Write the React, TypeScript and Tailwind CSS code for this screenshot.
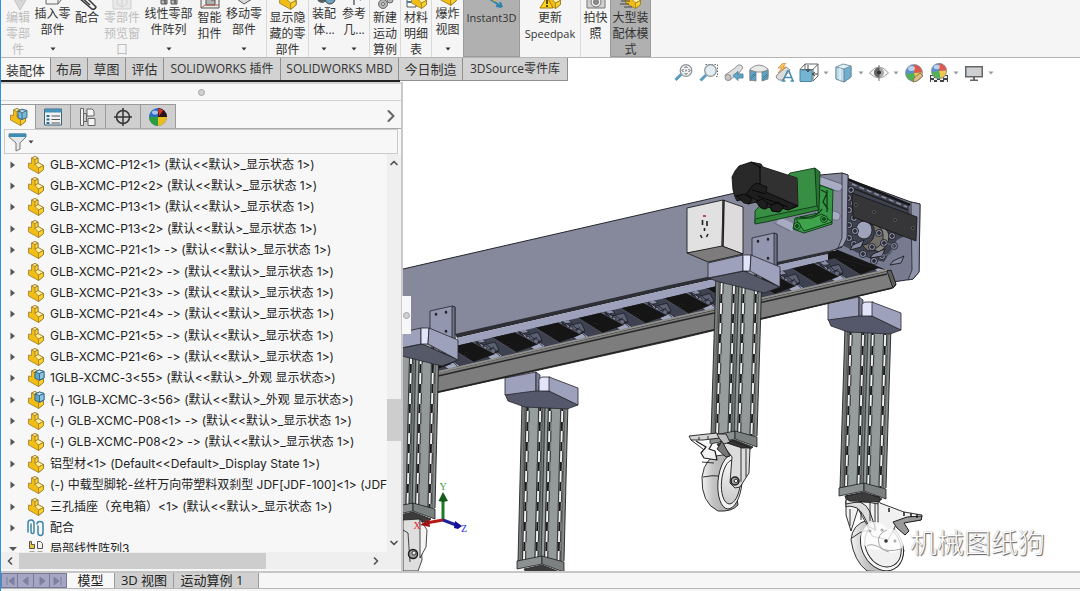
import React from 'react';
import clsx from 'clsx';
import { ChevronDown, ChevronLeft, ChevronRight, ChevronUp } from 'lucide-react';

interface RibbonItem {
  lines: string[];
  icon: string;
  width: string;
  menu?: boolean;
  disabled?: boolean;
  active?: boolean;
  divider?: boolean;
}

const ribbonItems: RibbonItem[] = [
  { lines: ['编辑', '零部', '件'], icon: 'edit', width: 'w-[34px]', disabled: true },
  { lines: ['插入零', '部件'], icon: 'insert', width: 'w-[35px]', menu: true },
  { lines: ['配合'], icon: 'clip', width: 'w-[34px]' },
  { lines: ['零部件', '预览窗', '口'], icon: 'preview', width: 'w-[36px]', disabled: true },
  { lines: ['线性零部', '件阵列'], icon: 'pattern', width: 'w-[57px]', menu: true },
  { lines: ['智能', '扣件'], icon: 'fastener', width: 'w-[25px]' },
  { lines: ['移动零', '部件'], icon: 'move', width: 'w-[44px]', menu: true },
  { lines: ['显示隐', '藏的零', '部件'], icon: 'part', width: 'w-[42px]', divider: true },
  { lines: ['装配', '体...'], icon: 'gear', width: 'w-[31px]', menu: true, divider: true },
  { lines: ['参考', '几...'], icon: 'axis', width: 'w-[30px]', menu: true },
  { lines: ['新建', '运动', '算例'], icon: 'motion', width: 'w-[31px]', divider: true },
  { lines: ['材料', '明细', '表'], icon: 'bom', width: 'w-[31px]', divider: true },
  { lines: ['爆炸', '视图'], icon: 'part', width: 'w-[32px]', menu: true, divider: true },
  { lines: ['Instant3D'], icon: 'instant', width: 'w-[57px]', active: true },
  { lines: ['更新', 'Speedpak'], icon: 'warn', width: 'w-[60px]' },
  { lines: ['拍快', '照'], icon: 'camera', width: 'w-[30px]', divider: true },
  { lines: ['大型装', '配体模', '式'], icon: 'large', width: 'w-[41px]', active: true },
];

const commandTabs = [
  { label: '装配体', width: 'w-[50px]' },
  { label: '布局', width: 'w-[37px]' },
  { label: '草图', width: 'w-[38px]' },
  { label: '评估', width: 'w-[38px]' },
  { label: 'SOLIDWORKS 插件', width: 'w-[117px]', latin: true },
  { label: 'SOLIDWORKS MBD', width: 'w-[118px]', latin: true },
  { label: '今日制造', width: 'w-[64px]' },
  { label: '3DSource零件库', width: 'w-[105px]', latin: true },
];

type NodeKind = 'part' | 'assembly' | 'mates' | 'pattern';

const treeNodes: { label: string; kind: NodeKind; open?: boolean }[] = [
  { label: 'GLB-XCMC-P12<1> (默认<<默认>_显示状态 1>)', kind: 'part' },
  { label: 'GLB-XCMC-P12<2> (默认<<默认>_显示状态 1>)', kind: 'part' },
  { label: 'GLB-XCMC-P13<1> (默认<<默认>_显示状态 1>)', kind: 'part' },
  { label: 'GLB-XCMC-P13<2> (默认<<默认>_显示状态 1>)', kind: 'part' },
  { label: 'GLB-XCMC-P21<1> -> (默认<<默认>_显示状态 1>)', kind: 'part' },
  { label: 'GLB-XCMC-P21<2> -> (默认<<默认>_显示状态 1>)', kind: 'part' },
  { label: 'GLB-XCMC-P21<3> -> (默认<<默认>_显示状态 1>)', kind: 'part' },
  { label: 'GLB-XCMC-P21<4> -> (默认<<默认>_显示状态 1>)', kind: 'part' },
  { label: 'GLB-XCMC-P21<5> -> (默认<<默认>_显示状态 1>)', kind: 'part' },
  { label: 'GLB-XCMC-P21<6> -> (默认<<默认>_显示状态 1>)', kind: 'part' },
  { label: '1GLB-XCMC-3<55> (默认<<默认>_外观 显示状态>)', kind: 'assembly' },
  { label: '(-) 1GLB-XCMC-3<56> (默认<<默认>_外观 显示状态>)', kind: 'assembly' },
  { label: '(-) GLB-XCMC-P08<1> -> (默认<<默认>_显示状态 1>)', kind: 'part' },
  { label: '(-) GLB-XCMC-P08<2> -> (默认<<默认>_显示状态 1>)', kind: 'part' },
  { label: '铝型材<1> (Default<<Default>_Display State 1>)', kind: 'part' },
  { label: '(-) 中载型脚轮-丝杆万向带塑料双刹型 JDF[JDF-100]<1> (JDF', kind: 'part' },
  { label: '三孔插座（充电箱）<1> (默认<<默认>_显示状态 1>)', kind: 'part' },
  { label: '配合', kind: 'mates' },
  { label: '局部线性阵列3', kind: 'pattern', open: true },
];

const Caret = ({ className }: { className?: string }) => (
  <svg viewBox="0 0 6 4" className={clsx('h-[4px] w-[6px]', className)}>
    <path d="M0.500 0.5h5L3 3.500z" fill="currentColor" />
  </svg>
);

const PartShape = () => (
  <g stroke="#94701c" strokeWidth="0.7" strokeLinejoin="round">
    <path d="M4.500 3 8 1.500 11 3v4.500l5.500 3v4L11.500 18.500 1.500 13V8L4.500 8.500z" fill="#f2bd14" />
    <path d="M4.500 3 8 1.500 11 3 8 4.500z" fill="#fff3a8" />
    <path d="M8 4.500 11 3v4.500L8 9.500z" fill="#f7d542" />
    <path d="M8 9.500 11 7.500l5.500 3L11.500 13z" fill="#fff0a0" />
    <path d="M11.500 13 16.500 10.500v4L11.500 18.500z" fill="#f9d22e" />
  </g>
);

const NodeIcon = ({ kind }: { kind: NodeKind }) => (
  <svg viewBox="0 0 19 20" className="h-5 w-[19px] shrink-0">
    {(kind === 'part' || kind === 'assembly') && <PartShape />}
    {kind === 'assembly' && (
      <g stroke="#285b7a" strokeWidth="0.8" strokeLinejoin="round">
        <path d="M8 4 12.500 2l4.500 1.500v6.500L12.500 12 8 10.500z" fill="#5fa8cc" />
        <path d="M8 4 12.500 2l4.500 1.500L12.500 5.500z" fill="#bfe3f3" />
        <path d="M12.500 5.500 17 3.500v6.500L12.500 12z" fill="#8cc6e0" />
      </g>
    )}
    {kind === 'mates' && (
      <g fill="none" stroke="#3e84a8" strokeWidth="1.500" strokeLinecap="round">
        <path d="M1 14V5q0-3 3-3t3 3v9q0 1.500-1.500 1.500T4 14V6" />
        <path d="M10 6q0-2.500 3-2.500t3 2.500v8.500q0 3-2.500 3t-2.500-3V8" />
      </g>
    )}
    {kind === 'pattern' && (
      <g stroke="#555" strokeWidth="1">
        <path d="M2.500 2.500h2v3h3v4h-5z" fill="#e9c63b" />
        <path d="M10.500 2.500h3l2 2v5h-5z" fill="#f2f2f2" />
        <path d="M2.500 13h5v4h-5zM10.500 13h5v4h-5z" fill="#eee" />
      </g>
    )}
  </svg>
);

const RibbonIcon = ({ name }: { name: string }) => {
  switch (name) {
    case 'edit':
      return <path d="M5 8 15 15 23 9 14 24zM8 14l8-3" fill="#d8d8d8" stroke="#c4c4c4" />;
    case 'insert':
      return <path d="M5 14h12v8H5zM5 14l3-4h12l-3 4M17 22l3-4v-8" fill="#f3f3f3" stroke="#666" />;
    case 'clip':
      return <path d="M4 12 17 23q3 1 4-2L10 10q-3-2-4 1l9 8" fill="none" stroke="#3c3c3c" strokeWidth="1.500" />;
    case 'preview':
      return <path d="M3 8h18v15H3zM7 12l5-2 5 2v6l-5 3-5-3zM12 14v7M7 12l5 2 5-2" fill="#e9e9e9" stroke="#cfcfcf" />;
    case 'pattern':
      return <path d="M4 18h4v4H4zM8 16h2v6H8zM14 18h4v4h-4zM18 16h2v6h-2z" fill="#bbb" stroke="#555" />;
    case 'fastener':
      return <g stroke="#555"><path d="M3 10h18v12H3z" fill="#ececec" /><path d="M8 12v7h9v-5h-4v-2z" fill="#b0b0b0" /><path d="M3 22 7 19h14" fill="none" stroke="#b15c44" /></g>;
    case 'move':
      return <path d="M5 17 12 14l8 3-8 5z" fill="#d9d9d9" stroke="#555" />;
    case 'part':
      return <g transform="translate(2 3) scale(1.1)"><PartShape /></g>;
    case 'gear':
      return <g><circle cx="10" cy="16" r="5" fill="#5b6064" /><circle cx="18" cy="17" r="5" fill="#68a3c0" stroke="#444" /></g>;
    case 'axis':
      return <path d="M12 23v-9M8 17h8M12 14l7 4" fill="none" stroke="#5c6770" strokeWidth="1.500" />;
    case 'motion':
      return <g fill="#b4b4b4" stroke="#6a6a6a"><circle cx="10" cy="18" r="4.500" /><circle cx="17" cy="14" r="3" /><circle cx="10" cy="18" r="1.500" fill="#eee" /></g>;
    case 'bom':
      return <g><path d="M3 12h9v9H3z" fill="#fff" stroke="#555" /><path d="M3 16h9" stroke="#3f7fa3" strokeWidth="2" /><g transform="translate(6 4)"><PartShape /></g></g>;
    case 'instant':
      return <g fill="none" stroke="#2f83ad" strokeWidth="2"><path d="M4 9 22 21M22 21l-6-1M22 21l-2-5" /><path d="M10 10 16 14" stroke="#e7b923" strokeWidth="4" /></g>;
    case 'warn':
      return <g><g transform="translate(6 4)"><PartShape /></g><path d="M9 11 15 22H2z" fill="#ffd21e" stroke="#a97c00" /><path d="M9 14v4M9 19v2" stroke="#222" strokeWidth="1.500" /></g>;
    case 'camera':
      return <g stroke="#777"><path d="M3 11h18v11H3z" fill="#d0d0d0" /><circle cx="12" cy="16" r="5" fill="#f0f0f0" /><circle cx="12" cy="16" r="2.500" fill="#8d8d8d" /></g>;
    default:
      return <g><g transform="translate(5 4)"><PartShape /></g><path d="M1 12h9M2 15h9M1 18h9M5 21h8" stroke="#444" /></g>;
  }
};

const Ribbon = () => (
  <div className="flex h-[58px] shrink-0 overflow-hidden border-b border-[#b5b5b5] bg-[#f5f5f5] text-xs leading-4">
    {ribbonItems.map((item) => (
      <button
        key={item.lines.join('')}
        disabled={item.disabled}
        className={clsx(
          'flex h-[57px] shrink-0 flex-col items-center justify-start whitespace-nowrap',
          item.width,
          item.divider && 'border-l border-[#d9d9d9]',
          item.active && 'border border-t-0 border-[#9a9a9a] bg-[#b0b0b0]',
          item.disabled ? 'text-[#bdbdbd]' : 'text-[#333]',
        )}
      >
        <svg viewBox="0 0 24 24" className={clsx('h-6 w-6 shrink-0', item.menu ? '-mt-[18px]' : '-mt-[14px]')}>
          <RibbonIcon name={item.icon} />
        </svg>
        {item.lines.map((line) => (
          <span key={line} className={/^[A-Z]/.test(line) ? 'text-[11px] leading-4' : undefined}>{line}</span>
        ))}
        {item.menu && <Caret className="mt-[9px] shrink-0" />}
      </button>
    ))}
  </div>
);

const Ball = () => (
  <g>
    <circle cx="10" cy="10" r="8.500" fill="#5a8fd0" />
    <path d="M10 10V1.500a8.500 8.500 0 0 1 8.500 8z" fill="#dc5a4e" />
    <path d="M10 10 18.500 9.500a8.500 8.500 0 0 1-7 8.800z" fill="#ecc94a" />
    <path d="M10 10 11.500 18.300A8.500 8.500 0 0 1 1.600 11z" fill="#52b055" />
    <ellipse cx="7.500" cy="5.500" rx="3.500" ry="2.500" fill="#fff" opacity="0.6" />
    <circle cx="10" cy="10" r="8.500" fill="none" stroke="#888" strokeWidth="0.6" />
  </g>
);

const hudTools: { label: string; menu?: boolean; icon: React.ReactNode }[] = [
  {
    label: '整屏显示全图',
    icon: <g fill="none"><path d="m7.500 11-6 6" stroke="#5b9dbd" strokeWidth="3" /><circle cx="12" cy="7.500" r="5.800" fill="#eef1f2" stroke="#8c9499" strokeWidth="1.300" /><circle cx="12" cy="7.500" r="1" fill="#888" /><path d="M10.500 5 12 3.500 13.500 5M10.500 10l1.500 1.500 1.500-1.500M9.500 6 8 7.500 9.500 9M14.500 6 16 7.500 14.500 9" stroke="#555" /></g>,
  },
  {
    label: '局部放大',
    icon: <g fill="none"><path d="M6.500 1.500h12v12h-3" stroke="#666" strokeDasharray="1.500 1.500" /><path d="m7 12-5.500 5.500" stroke="#5b9dbd" strokeWidth="3" /><circle cx="11.500" cy="7.500" r="5.800" fill="#e3edf1" stroke="#8c9499" strokeWidth="1.300" /></g>,
  },
  {
    label: '上一视图',
    icon: <g stroke="#8a8a8a" strokeWidth="0.9"><path d="M1 12 11 5l3-3 3 0 2 3-4 5-9 7q-4 1-5-5z" fill="#dedede" /><circle cx="4" cy="14.500" r="3" fill="#c6c6c6" /><path d="M9 12.500l5-4v2.500h5v4h-5v2.500z" fill="#5fa5c6" stroke="#4a819d" /></g>,
  },
  {
    label: '剖面视图',
    icon: <g stroke="#777" strokeWidth="0.8"><path d="M1 6q9-8 18 0v8q-3-4-5-4V9H6v5l-5 4z" fill="#e9e9e9" /><path d="M1 7l6 2v9l-6-1zM13 9l6-2v9l-6 2z" fill="#5ea3c3" /><path d="m2 14 4-4M2 16l5-5M14 15l4-4M14 17l5-5" stroke="#3c7492" /></g>,
  },
  {
    label: '动态注解视图',
    icon: <g><path d="M2 13 12 4l4 3-8 10q-5 1-6-4z" fill="#dcdcdc" stroke="#8d8d8d" /><path d="M9 0 4 5h4l-4 5 8-6H9l3-4z" fill="#f9c65a" stroke="#c98138" strokeWidth="0.7" /><path d="M9 18 13.500 8h1.500l4 10M11 14.500h6M7.500 18h4M16.500 18h3.500" fill="none" stroke="#4a8cb0" strokeWidth="1.600" /></g>,
  },
  {
    label: '视图定向',
    menu: true,
    icon: <g strokeWidth="1"><path d="M1 6.500 6 1h13v12l-5 5M1 6.500h13l5-5.500M6 1v6M14 6v12" fill="#fff" stroke="#666" /><path d="M1 7h12v11.500H1z" fill="#74b5d3" stroke="#4a87a5" /><path d="M9 2v6M7 6l2 3 2-3M19 11h-5M16 9l-3 2 3 2" fill="none" stroke="#444" /></g>,
  },
  {
    label: '显示样式',
    menu: true,
    icon: <g stroke="#6b8b9b" strokeWidth="0.9"><path d="M2 4 9 1l8 2v11l-7 5-8-3z" fill="#e4f0f5" /><path d="M10 6 17 3v11l-7 5z" fill="#6fb0cf" /><path d="M2 4 10 6v13l-8-3z" fill="#bcdae7" /><path d="M6 5v12.500" stroke="#fff" /></g>,
  },
  {
    label: '隐藏/显示项目',
    menu: true,
    icon: <g><path d="M0.500 10q9.500-12 19 0-9.500 10-19 0z" fill="#f5f5f5" stroke="#999" /><circle cx="10" cy="9.500" r="5" fill="#a8a8a8" /><path d="M10 4.500a5 5 0 0 0 0 10z" fill="#666" /><circle cx="10" cy="9.500" r="2" fill="#222" /><path d="M10 2v16" stroke="#555" strokeWidth="0.800" /></g>,
  },
  {
    label: '编辑外观',
    icon: <g><Ball /><path d="m9 19 1-4 6-5 3 3-6 5z" fill="#dbbd85" stroke="#7b6a4b" strokeWidth="0.8" /></g>,
  },
  {
    label: '应用布景',
    menu: true,
    icon: <g><path d="M1 12h18v7H1z" fill="#444" /><path d="M2 13h3v2H2zM15 13h3v2h-3zM5 15h3v2H5zM11 15h3v2h-3zM2 17h3v2H2zM8 17h3v2H8zM15 17h3v2h-3z" fill="#eee" /><g transform="translate(1 -1) scale(.9)"><Ball /></g></g>,
  },
  {
    label: '视图设定',
    menu: true,
    icon: <g><path d="M1 3h18v11.500H1z" fill="#666" /><path d="M2.500 4.500h15v8.500h-15z" fill="#cdd0d2" /><path d="M9 14h2v2.500h3v1.500H6v-1.500h3z" fill="#666" /></g>,
  },
];

const HeadsUpToolbar = () => (
  <div className="ml-[106px] mt-[5px] flex shrink-0">
    {hudTools.map((tool) => (
      <button
        key={tool.label}
        aria-label={tool.label}
        className={clsx('flex h-5 shrink-0 items-center', tool.menu ? 'w-[35px] gap-1' : 'w-[25px]')}
      >
        <svg viewBox="0 0 20 20" className="h-5 w-5 shrink-0">{tool.icon}</svg>
        {tool.menu && <Caret className="text-[#999]" />}
      </button>
    ))}
  </div>
);

const panelTabs: { label: string; icon: React.ReactNode }[] = [
  { label: 'FeatureManager 设计树', icon: <g transform="translate(1 0)"><PartShape /><path d="M9 4l4-2 5 1.500v7L13 12.500 9 11zM9 4l4 1.500 5-2M13 5.500v7" fill="#77b8d6" stroke="#285b7a" strokeWidth="0.8" /></g> },
  { label: 'PropertyManager', icon: <g><path d="M1.500 2h17v16h-17z" fill="#f2f2f2" stroke="#3b6077" /><path d="M1.500 2h17v3.500h-17z" fill="#4792b8" /><path d="M3.500 8h3v2h-3zM3.500 11.500h3v2h-3zM3.500 15h3v2h-3z" fill="#2f6f93" /><path d="M8.500 9H17M8.500 12.500H17M8.500 16H17" stroke="#555" strokeWidth="1.200" /></g> },
  { label: 'ConfigurationManager', icon: <g fill="#f4f4f4" stroke="#666"><path d="M2.500 1.500h3v17h-3z" /><path d="M5.500 6.500h3M5.500 14.500h4M8.500 6.500v8" /><path d="M9 2h5l2 2v5H9zM10 11.500h7v7h-7z" /></g> },
  { label: 'DimXpertManager', icon: <g fill="none" stroke="#333" strokeWidth="1.500"><circle cx="10" cy="10" r="6.500" /><path d="M10 1v18M1 10h18" /></g> },
  { label: 'DisplayManager', icon: <g><circle cx="10" cy="10" r="9" fill="#2d6cc0" /><path d="M10 10V1a9 9 0 0 1 9 9z" fill="#2b1413" /><path d="M11 9 10 1.500q3 0 5 2z" fill="#d6342b" /><path d="M10 10h9a9 9 0 0 1-9 9z" fill="#e8bd22" /><path d="M10 10v9a9 9 0 0 1-9-9z" fill="#2d9c3d" /><ellipse cx="7" cy="5.500" rx="3" ry="2" fill="#fff" opacity="0.6" /></g> },
];

const FeaturePanel = () => (
  <aside className="flex w-[402px] shrink-0 flex-col border-r-2 border-[#c9c9c9] bg-[#f7f7f7]">
    <div className="flex h-[19px] shrink-0 items-center justify-center border-b border-t-2 border-[#d4d4d4]">
      <span className="h-[7px] w-[7px] rounded-full border border-[#a5a5a5] bg-[#d0d0d0]" />
    </div>
    <div className="mt-[3px] flex h-[25px] shrink-0 border-b border-[#a8a8a8]">
      {panelTabs.map((tab, i) => (
        <button
          key={tab.label}
          aria-label={tab.label}
          className={clsx(
            'flex w-[35px] items-center justify-center border-r border-t border-[#9b9b9b]',
            i === 0 ? '-mb-px h-[25px] bg-[#f7f7f7]' : 'h-6 bg-[#cfcfcf]',
          )}
        >
          <svg viewBox="0 0 20 20" className="h-5 w-5">{tab.icon}</svg>
        </button>
      ))}
      <button aria-label="展开" className="ml-auto text-[#666]">
        <ChevronRight className="h-5 w-5" strokeWidth={2.5} />
      </button>
    </div>
    <label className="mx-[3px] flex h-[25px] shrink-0 items-center border border-[#cbcbcb] pl-[3px]">
      <svg viewBox="0 0 20 20" className="h-5 w-5 shrink-0">
        <path d="M1 2h17v3l-6 6v6l-4 2v-8L1 5z" fill="#e4e8ea" stroke="#777" />
        <path d="M1 1.500h17v3.500H1z" fill="#3c8db5" />
      </svg>
      <Caret className="text-[#444]" />
      <input aria-label="过滤器" className="min-w-0 flex-1 bg-transparent px-1 text-xs outline-none" />
    </label>
    <div className="flex min-h-0 flex-1">
      <div className="min-w-0 flex-1 overflow-hidden">
        <ul className="grid h-[406px] auto-rows-fr [font-family:Inter,'Noto_Sans_CJK_SC',sans-serif] [font-feature-settings:'calt'_0] [font-variant-ligatures:none]">
          {treeNodes.map((node) => (
            <li key={node.label} className="flex min-h-0 items-center whitespace-nowrap pl-2 text-xs leading-5 text-[#222]">
              <button aria-label="展开节点" className="flex w-[18px] shrink-0">
                <svg viewBox="0 0 8 8" className="h-2 w-2 text-[#555]">
                  <path d={node.open ? 'M0 2h8L4 6z' : 'M1.500 0.500v7L6 4z'} fill="currentColor" />
                </svg>
              </button>
              <NodeIcon kind={node.kind} />
              <span className="ml-1">{node.label}</span>
            </li>
          ))}
        </ul>
      </div>
      <div className="flex w-[14px] shrink-0 flex-col items-center justify-between bg-[#efefef] py-[3px] text-[#555]">
        <ChevronUp className="h-3 w-3 shrink-0" strokeWidth={3.5} />
        <span className="mt-[134px] h-[42px] w-full bg-[#cdcdcd]" />
        <ChevronDown className="h-3 w-3 shrink-0" strokeWidth={3.5} />
      </div>
    </div>
    <div className="flex h-[17px] shrink-0 items-center bg-[#efefef] pl-[3px] pr-[19px] text-[#555]">
      <ChevronLeft className="h-3 w-3 shrink-0" strokeWidth={3.5} />
      <span className="ml-[3px] h-4 w-[247px] bg-[#cdcdcd]" />
      <ChevronRight className="ml-auto h-3 w-3 shrink-0" strokeWidth={3.5} />
    </div>
    <div className="h-[2px] shrink-0" />
  </aside>
);

const lilac = '#9da1bb';
const edge = '#24252c';

/* Aluminium profile: x0/y0 is the left top corner, x1/y1 the left bottom one. */
const Leg = ({ x0, y0, x1, y1 }: { x0: number; y0: number; x1: number; y1: number }) => {
  const w = 46;
  const band = (a: number, b: number, fill: string) => (
    <path key={a} d={`M${x0 + a * w} ${y0}L${x0 + b * w} ${y0}L${x1 + b * w} ${y1}L${x1 + a * w} ${y1}z`} fill={fill} />
  );
  const line = (f: number) => `M${x0 + f * w} ${y0}L${x1 + f * w} ${y1}`;
  return (
    <g>
      {band(0, 1, '#7a8080')}
      {band(0.17, 0.36, '#979d9d')}
      {band(0.66, 0.85, '#949a9a')}
      {band(0.93, 0.98, '#8b9191')}
      <g fill="none">
        {[0.13, 0.4, 0.61, 0.88].map((f) => (
          <g key={f}>
            <path d={line(f)} stroke="#f2f2f2" strokeWidth="1.800" />
            <path d={line(f)} stroke="#1c1c1c" strokeWidth="1.900" strokeDasharray="9 11" />
            <path d={line(f - 0.035)} stroke="#2a2a2a" strokeWidth="0.900" />
            <path d={line(f + 0.035)} stroke="#2a2a2a" strokeWidth="0.800" strokeDasharray="11 9" strokeDashoffset="11" />
          </g>
        ))}
        <path d={line(0.06)} stroke="#4d5151" strokeWidth="0.700" />
        <path d={line(0.45)} stroke="#4a4e4e" strokeWidth="0.800" />
        <path d={line(0.5)} stroke="#303434" strokeWidth="0.900" />
        <path d={line(0.54)} stroke="#9aa0a0" strokeWidth="1.500" />
        <path d={line(0.94)} stroke="#4d5151" strokeWidth="0.700" />
        <path d={line(0)} stroke="#222" strokeWidth="0.900" />
        <path d={line(1)} stroke="#222" strokeWidth="0.900" />
      </g>
      <g stroke="#1c1c1c" strokeWidth="0.8" transform={`translate(${x1} ${y1})`}>
        <path d="M6 8 24 4 42 11 38 14 9 13z" fill="#3c3c3c" />
        <path d="M-1 0 24-5V3L-1 8z" fill="#8b9191" />
        <path d="M24-5 46 1V11L24 3z" fill="#7b8181" />
      </g>
    </g>
  );
};

const Block = ({ x, y }: { x: number; y: number }) => (
  <g transform={`translate(${x} ${y})`} stroke={edge} strokeWidth="0.8" strokeLinejoin="round">
    <path d="M0 18 30 14 44 15 73 29 62 33 20 31 3 25z" fill="#55586a" />
    <path d="M0 2 31-4V15L22 16 0 19z" fill={lilac} />
    <path d="M31-4 35-1V2l-1 13h-3z" fill="#7c8097" />
    <path d="M34 3 37 1H45V15H34z" fill="#e2e5fa" />
    <path d="M44 1 73 12V29L44 15z" fill={lilac} />
  </g>
);

const Bracket = ({ x, y }: { x: number; y: number }) => (
  <g transform={`translate(${x} ${y})`} stroke={edge} strokeWidth="0.8" strokeLinejoin="round">
    <path d="M1 23 36 16 72 32 56 38 8 26z" fill="#565968" />
    <path d="M44-17 66-22 69-21V12L44 2z" fill="#9296ae" />
    <path d="M66-22 69-21V12L66 10z" fill="#6f7388" />
    <path d="M0 8 35 0V16L0 23z" fill={lilac} />
    <path d="M35 0H43L42 16H35z" fill="#e2e5fa" />
    <path d="M43 0 72 12V32L42 16z" fill={lilac} />
    <path d="M50-14v.5M60-16v.5M60 3v.5" strokeWidth="2.500" strokeLinecap="round" />
  </g>
);

const Belt = () => (
  <g clipPath="url(#belt)">
    <path d="M403 240H900V400H403z" fill="#3e4150" />
    {Array.from({ length: 12 }, (_, i) => {
      const x = 466 + (i - 1) * 43;
      const y = 354 - (i - 1) * 9.7;
      return (
        <g key={i} transform={`translate(${x} ${y})`}>
          <g stroke="#15161b" strokeWidth="0.7">
            <path d="M-10-15 3-18 16-10 8-9z" fill="#6b7086" />
            <path d="M7-8 12-12 22-6 16-3z" fill="#9a9fb9" />
            <path d="M17-9 29-12 33-4 22 0z" fill="#5b6073" />
            <path d="M20 2 31-2 37 2 26 6z" fill="#a2a7c0" />
            <path d="M3-17 12-19 20-12 14-11z" fill="#8a8fa8" />
            <path d="M10-13l7 12M2-12l12-3M16-1l12-6M21 3l12-6M4-16l14 10M20-10l14 12" fill="none" />
            <circle cx="12" cy="-8" r="2.500" fill="#2a2c36" />
            <circle cx="27" cy="-3" r="2.500" fill="#686d82" />
            <circle cx="19" cy="-6" r="2" fill="#7d8299" />
          </g>
          <path d="M-25-12 -3-17 29 0 7 8z" fill="#151515" />
          <path d="M-25-12 7 8M-3-17 29 0" stroke="#5a5d6a" strokeWidth="0.700" />
          <circle r="1.500" fill="#000" stroke="#3a3a3a" strokeWidth="0.600" />
        </g>
      );
    })}
  </g>
);

const chainLinks = [
  [851, 190], [848, 198], [854, 203], [849, 210], [854, 218], [849, 225], [855, 231], [849, 238], [854, 244],
  [879, 233], [884, 243], [863, 254], [882, 256], [892, 236], [894, 246], [874, 261], [872, 247],
];

const Drive = () => (
  <g strokeLinejoin="round">
    <path d="M840 176 911 202 920 204 919 272 913 279 893 282 880 270 836 250z" fill="#777b90" stroke={edge} />
    <path d="M911 202 920 204 919 272 913 279 908 280 912 270z" fill="#9094ab" stroke={edge} strokeWidth="0.8" />
    <path d="M847 181 866 188 909 206 912 232 897 240 884 262 868 258 844 246z" fill="#3f424f" />
    <path d="M847 179 910 205" stroke="#161616" strokeWidth="2.500" />
    <path d="M850 187 908 210" stroke="#202020" strokeWidth="1.500" />
    <path d="M852 184 907 207" stroke="#8b8fa2" strokeWidth="1.500" strokeDasharray="5 3" />
    <g stroke="#131419" strokeWidth="0.8">
      <ellipse cx="864" cy="230" rx="8" ry="9" fill="#9fa3b9" />
      <path d="M868 222q8 2 6 14-3 9-12 9l6 6q16 0 17-13 0-9-8-13z" fill="#716f68" />
      <path d="M878 226q6 3 5 14-3 8-10 9l6 3q10-5 10-17-2-8-11-9z" fill="#8a8780" />
      {chainLinks.map(([cx, cy]) => (
        <g key={`${cx}-${cy}`}>
          <circle cx={cx} cy={cy} r="3.500" fill="#8b8fa5" />
          <circle cx={cx} cy={cy} r="1.400" fill="#3b3e4a" />
        </g>
      ))}
      <path d="M853 245 864 240 861 247 850 250zM873 254 885 249 882 256 870 258zM893 261 904 256 901 263 890 265z" fill="#85899e" />
      <path d="M886 243l8 3-4 8-9 2" fill="none" stroke="#5b5f70" strokeWidth="1.500" />
    </g>
    <path d="M852 193 917 217 916 241 853 217z" fill="#363638" stroke="#141414" strokeWidth="0.800" />
    {[[856, 205], [874, 212], [895, 220], [913, 228]].map(([cx, cy]) => (
      <circle key={cx} cx={cx} cy={cy} r="1.600" fill="#222" stroke="#777" strokeWidth="0.500" />
    ))}
    <path d="M826 252 838 250 889 271 866 277 826 264z" fill="#161616" />
    <circle cx="854" cy="265" r="1.200" fill="#555" />
  </g>
);

const Motor = () => (
  <g strokeLinejoin="round">
    <g fill="none" strokeLinecap="round">
      <path d="M821 181 838 187M820 212 836 216" stroke="#565a6c" strokeWidth="9" />
      <path d="M821 181 838 187M820 212 836 216" stroke="#a7abc4" strokeWidth="7.500" />
      <path d="M778 220 794 228" stroke="#a7abc4" strokeWidth="7" strokeLinecap="butt" />
      <path d="M774 223l16 8" stroke="#5d6074" strokeWidth="0.700" />
    </g>
    <g stroke="#0f3a17" strokeWidth="0.900">
      <path d="M820 185 825 187 833 190 832 224 804 233 793 229 795 218 818 213z" fill="#379845" />
      <path d="M800 217q16 2 22-8M821 190l6 3-4 9 5 7M827 190v22" fill="none" strokeWidth="1.300" />
      <path d="M796 219 812 218 822 214 832 222 804 231z" fill="#3ea34b" />
      <circle cx="797" cy="226" r="3.500" fill="#3ea34b" />
      <circle cx="824" cy="219" r="3.500" fill="#3ea34b" />
      <circle cx="797" cy="226" r="1.500" fill="#1b5625" />
      <circle cx="824" cy="219" r="1.500" fill="#1b5625" />
      <path d="M755 211 790 173 815 168 818 208 766 221 755 223z" fill="#388f44" />
      <path d="M815 168 820 172 819 210 817 211z" fill="#2a7235" />
      <path d="M755 219 817 206 819 210 766 222 755 224z" fill="#2f8439" />
    </g>
    <path d="M732 177 735 171 739 166 748 163 751 162 761 164 763 167 797 178 798 206 788 210 783 208 778 212 772 211 770 207 764 209 759 206 757 202 748 204 744 199 737 201 735 197 733 190z" fill="#29292a" stroke="#080808" strokeWidth="0.800" />
    <path d="M761 167 797 178 798 206 761 190z" fill="#313132" />
    <g fill="#1e1e1e" stroke="#000" strokeWidth="0.700">
      <path d="M753 185 757 183 767 187 766 192 798 206 788 210 756 200 746 194z" />
      <path d="M736 196l8-2 8 5-3 5-5-1zM756 202l6-3 6 4-2 6-5-1zM770 206l8-4 6 5-4 5-8-1z" />
    </g>
    <path d="M760 166V184M752 190l14 4M758 196l30 11M751 162l10 6" stroke="#000" fill="none" strokeWidth="0.800" />
  </g>
);

const SocketBox = () => (
  <g stroke="#1f1f1f" strokeWidth="0.900" strokeLinejoin="round">
    <path d="M687 208 723 200 722 247 687 253z" fill="#e2e1e1" />
    <path d="M723 200 743 207V254L722 246z" fill="#dddbdb" />
    <path d="M724 200 723 246" strokeWidth="1.500" />
    <path d="M687 253 722 246 743 254 708 262z" fill="#7d7b7b" />
    <path d="M703 216h3" stroke="#a32020" strokeWidth="1.500" />
    <path d="M702.500 220v5M707 221v5M704.500 228v3M700.500 235l1.500 3M708 234l-1.500 3" strokeWidth="1.600" />
  </g>
);

const FrontCaster = () => (
  <g stroke="#1d1d1d" strokeWidth="0.900" strokeLinejoin="round">
    <path d="M722 455q-17 0-20 22-1 26 16 34 14 1 20-6l-8-50z" fill="url(#tread)" />
    <ellipse cx="730" cy="482" rx="12" ry="27" fill="#f3f3f3" transform="rotate(5 730 482)" />
    <ellipse cx="731" cy="482" rx="9.500" ry="22" fill="url(#hub)" transform="rotate(5 731 482)" />
    <path d="M703 477q10-2 16-1" fill="none" />
    <path d="M720 441 750 447 749 473 740 487 735 488 730 483 732 457z" fill="#dcdcdc" />
    <path d="M741 448v34M746 449v28" fill="none" />
    <circle cx="735" cy="481" r="4" fill="#aaa" strokeWidth="1.500" />
    <circle cx="736" cy="481" r="1.800" fill="#fff" />
    <path d="M732 440 750 448 742 448 727 443z" fill="#333" />
    <path d="M722 441 730 456 726 457 717 449z" fill="#777" />
    <path d="M689 436 717 433 720 438 703 440 691 440z" fill="#d4d4d4" />
    <path d="M696 441 706 447 701 453 704 458 717 460 715 451 709 449 712 444" fill="#f2f2f2" strokeWidth="1.200" />
    <path d="M691 440 703 449M702 462l12 1M699 437v3M708 436v3" fill="none" />
    <path d="M717 434h9l4 8-6 2-5-6z" fill="#bcbcbc" />
  </g>
);

const RearCaster = () => (
  <g stroke="#1d1d1d" strokeWidth="0.900" strokeLinejoin="round">
    <path d="M868 520q-16 4-17 20 3 21 16 31l18 1q18-4 19-22z" fill="url(#tread)" />
    <ellipse cx="882" cy="546" rx="20" ry="26" fill="#f7f7f7" transform="rotate(-28 882 546)" />
    <ellipse cx="883" cy="546" rx="17" ry="22" fill="#f0f0f0" transform="rotate(-28 883 546)" />
    <path d="M846 500 878 498 880 503 904 512 922 515 921 520 897 523 888 540 872 536 866 523 858 509 851 531 846 515z" fill="#f1f1f1" />
    <path d="M846 502q18-4 24 10l6 18-7-3q-6-15-12-19-8-3-11-1z" fill="#ddd" />
    <path d="M850 509V526M861 512V520M870 501v20M875 501v30M878 503v20" fill="none" />
    <path d="M852 538q8-7 16-8" fill="none" />
    <path d="M893 522 907 517 922 516 921 520 904 523 909 531 905 535 897 528z" fill="#999" strokeWidth="1" />
    <path d="M904 512v4M911 513v4M917 514v4M889 508v4" strokeWidth="1.500" />
    <path d="M845 496 862 493 880 497 878 502 862 499 847 502z" fill="#666" />
    <path d="M846 500q16-5 32 0v4q-16-4-32 0z" fill="#eee" />
    <circle cx="861" cy="501" r="1" />
  </g>
);

const Triad = () => (
  <g fontSize="10" textAnchor="middle" className="[font-family:'Liberation_Serif',serif]">
    <path d="M443 520V500" stroke="#1d7a25" strokeWidth="3" />
    <path d="M443 492 438.500 501 443 502 448 501z" fill="#145c1c" />
    <path d="M443 520 426 523" stroke="#b51a1a" strokeWidth="3" />
    <path d="M420 525 429 519 430 527z" fill="#a01313" />
    <path d="M443 520 456 525" stroke="#20209b" strokeWidth="3" />
    <path d="M462 526 455 521 454 528 458 529z" fill="#10109a" />
    <text x="443" y="490" fill="#2f9a35">Y</text>
    <text x="417" y="529" fill="#e02b2b">X</text>
    <text x="464" y="532" fill="#2b2be8">Z</text>
  </g>
);

const Model = () => (
  <svg viewBox="403 82 677 489" preserveAspectRatio="xMinYMin slice" className="absolute inset-0 h-full w-full">
    <defs>
      <clipPath id="belt">
        <path d="M438 350 670 297 836 258 889 271 670 321 438 373z" />
      </clipPath>
      <linearGradient id="tread">
        <stop offset="0" stopColor="#f2f2f2" />
        <stop offset="0.300" stopColor="#c4c4c4" />
        <stop offset="1" stopColor="#999" />
      </linearGradient>
      <linearGradient id="hub" x1="0" x2="0" y1="0" y2="1">
        <stop offset="0" stopColor="#f8f8f8" />
        <stop offset="1" stopColor="#c9c9c9" />
      </linearGradient>
    </defs>
    <Leg x0={522} y0={402} x1={518} y1={561} />
    <Block x={505} y={376} />
    <RearCaster />
    <Leg x0={845} y0={326} x1={840} y1={488} />
    <Block x={828} y={301} />
    <Drive />
    <path d="M403 269 735 193 820 175 842 173 848 175 848 238 842 247 828 252 670 286 455 335 403 346z" fill="#85899b" />
    <path d="M403 269 735 193M820 175 842 173 848 175 847 238 842 247 828 252" fill="none" stroke={edge} />
    <path d="M842 173 848 175 847 238 843 246 838 248 842 238z" fill="#989cb3" stroke={edge} strokeWidth="0.800" />
    <path d="M455 334 670 285 828 251 829 254 670 289 457 338z" fill="#2d2e36" />
    <path d="M457 338 670 289 828 254V262L670 298 457 347z" fill={lilac} />
    <Belt />
    <path d="M436 373 670 320 887 271 891 272 896 285 893 288 670 341 436 393z" fill="#7d7d7d" stroke="#1e1e1e" strokeWidth="0.800" />
    <path d="M438 372 670 319 887 270" fill="none" stroke="#8f8f8b" strokeWidth="2" />
    <path d="M438 376 670 323 887 274" fill="none" stroke="#262626" strokeWidth="1.500" />
    <path d="M438 392 670 340 892 288" fill="none" stroke="#222" strokeWidth="1.500" />
    <path d="M887 271 891 270 896 284 893 288z" fill="#5e5e5a" stroke="#1e1e1e" />
    <Motor />
    <SocketBox />
    <Leg x0={716} y0={274} x1={711} y1={436} />
    <Bracket x={708} y={255} />
    <FrontCaster />
    <Leg x0={393} y0={344} x1={389} y1={508} />
    <Bracket x={386} y={328} />
    <g stroke="#1d1d1d" strokeWidth="0.800">
      <path d="M403 520 420 519 422 560 418 571 403 571z" fill="#dedede" />
      <path d="M420 519 427 530 426 547 420 558z" fill="#f5f5f5" />
      <path d="M403 530 408 533 410 562" fill="none" />
      <circle cx="413" cy="554" r="4.500" fill="#9c9c9c" strokeWidth="1.500" />
      <circle cx="414" cy="553" r="2" fill="#eee" />
    </g>
    <Triad />
    <g opacity="0.800">
      <circle cx="875" cy="536" r="14" fill="#fff" />
      <ellipse cx="891" cy="541" rx="13" ry="12" fill="#fff" />
      <path d="M887 530a12 11 0 0 0-8 14q2 6 10 8" fill="none" stroke="#888" strokeWidth="0.900" />
      <path d="M867 546q4-3 12 1 8 6 22 2" fill="none" stroke="#888" strokeWidth="0.900" />
    </g>
    <circle cx="870" cy="531" r="1.500" fill="#aaa" />
    <circle cx="882" cy="530" r="1.500" fill="#aaa" />
    <circle cx="886" cy="541" r="1.800" fill="#333" />
    <circle cx="895" cy="541" r="1.500" fill="#aaa" />
  </svg>
);

const Viewport = () => (
  <main className="relative min-w-0 flex-1">
    <div className="absolute inset-0 overflow-hidden">
      <Model />
      <p className="absolute bottom-[10px] right-[35px] text-[27px] font-light leading-9 text-white [text-shadow:1px_1px_1px_#555,0_0_1px_#999]">
        机械图纸狗
      </p>
    </div>
    <button
      aria-label="折叠面板"
      className="absolute -left-[1px] top-[214px] flex h-[38px] w-[9px] items-center justify-center bg-[#f7f7f7]"
    >
      <span className="h-[7px] w-[7px] rounded-full border border-[#a5a5a5] bg-[#d0d0d0]" />
    </button>
  </main>
);

const BottomBar = () => (
  <footer className="h-5 shrink-0 border-t-2 border-[#c6c6c6] bg-[#f6f6f6] text-xs text-[#222]">
    <div className="flex h-4 border-b border-[#b5b5b5]">
      <div className="flex border border-[#77799a] bg-[#a4a6c2]">
        {['M3 1v8M10 1 5 5l5 4z', 'M8 1 3 5l5 4z', 'M4 1l5 4-5 4z', 'M9 1v8M2 1l5 4-5 4z'].map((d) => (
          <button key={d} aria-label="切换标签" className="flex w-4 items-center justify-center border-r border-[#77799a] last:border-r-0">
            <svg viewBox="0 0 12 10" className="h-[10px] w-3">
              <path d={d} fill="#7c7f9f" stroke="#7c7f9f" />
            </svg>
          </button>
        ))}
      </div>
      <button className="w-[47px] bg-[#f8f8f8] text-[13px] leading-[15px]">模型</button>
      <button className="w-[60px] border-x border-[#9b9b9b] bg-[#d0d0d0] text-[13px] leading-[15px]">3D 视图</button>
      <button className="w-[85px] border-r border-[#9b9b9b] bg-[#d0d0d0] pr-2 text-[13px] leading-[15px]">运动算例 1</button>
    </div>
  </footer>
);

export default function App() {
  return (
    <div className="flex h-screen flex-col overflow-hidden border-l border-[#2f8fe0] bg-white [font-family:'Open_Sans','Noto_Sans_CJK_SC',sans-serif]">
      <Ribbon />
      <nav className="flex h-6 shrink-0">
        <div className="flex h-6 shrink-0">
          {commandTabs.map((tab, i) => (
            <button
              key={tab.label}
              className={clsx(
                'h-[23px] shrink-0 whitespace-nowrap border-r border-[#8f8f8f] leading-5 text-[#333]',
                tab.width,
                tab.latin ? 'text-xs' : 'text-[13px]',
                i === 0 ? 'bg-[#f7f7f7]' : 'border-b bg-[#d2d2d2]',
              )}
            >
              {tab.label}
            </button>
          ))}
        </div>
        <HeadsUpToolbar />
      </nav>
      <div className="-mt-[2px] h-[2px] w-[399px] shrink-0 bg-[#222]" />
      <div className="flex min-h-0 flex-1">
        <FeaturePanel />
        <Viewport />
      </div>
      <BottomBar />
    </div>
  );
}
